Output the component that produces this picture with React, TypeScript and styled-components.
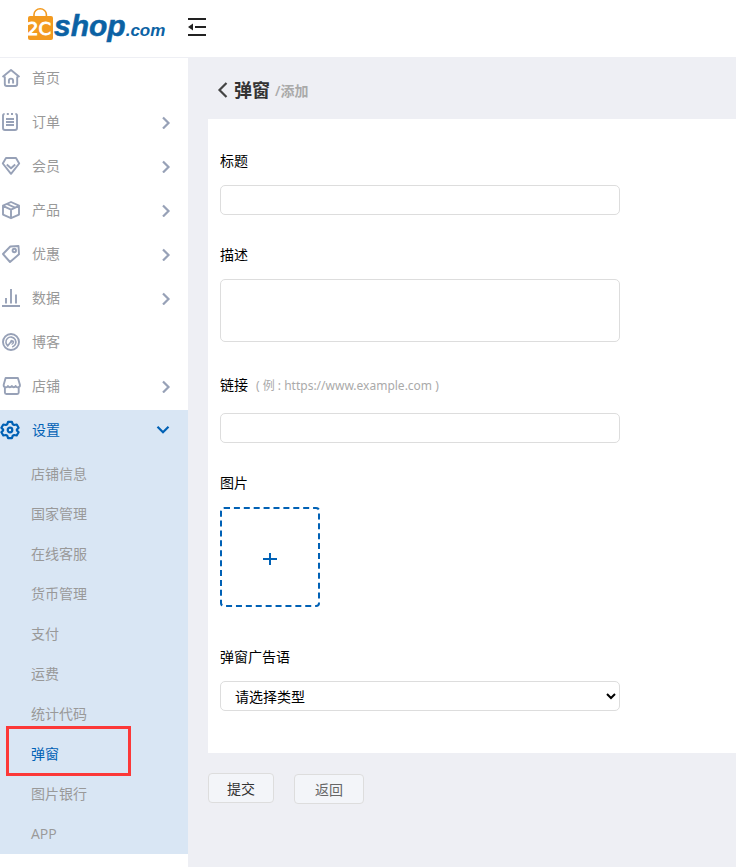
import React from "react";
import styled, { createGlobalStyle } from "styled-components";

const GlobalStyle = createGlobalStyle`
  * { box-sizing: border-box; }
  body {
    margin: 0;
    background: #fff;
    font-family: "Open Sans", "Noto Sans CJK SC", sans-serif;
    font-size: 14px;
    color: #000;
  }
  button, input, textarea, select { font: inherit; }
`;

const Page = styled.div`
  display: flex;
  flex-direction: column;
  min-height: 100vh;
`;

const Header = styled.header`
  display: flex;
  align-items: center;
  height: 58px;
  padding-bottom: 3px;
  border-bottom: 1px solid #eeeff4;
`;

const LogoLink = styled.a`
  display: block;
  width: 188px;
  height: 54px;
`;

const IconButton = styled.button`
  display: flex;
  padding: 0;
  border: 0;
  background: none;
  color: #222;
  cursor: pointer;
`;

const Body = styled.div`
  display: flex;
  flex: 1;
`;

const Sidebar = styled.nav`
  flex: 0 0 188px;
`;

const Menu = styled.ul`
  display: flex;
  flex-direction: column;
  gap: 4px;
  margin: 0;
  padding: 0;
  list-style: none;
`;

const MenuItem = styled.li<{ $open?: boolean }>`
  background: ${(p) => (p.$open ? "#d9e6f4" : "transparent")};
`;

const MenuLink = styled.a<{ $active?: boolean }>`
  display: flex;
  align-items: center;
  height: 40px;
  padding-right: 16px;
  color: ${(p) => (p.$active ? "#0061b5" : "#999")};
  text-decoration: none;

  svg { color: ${(p) => (p.$active ? "#0061b5" : "#97a1b7")}; }
`;

const MenuText = styled.span`
  flex: 1;
  padding: 0 0 2px 10px;
`;

const SubMenu = styled.ul`
  margin: 0;
  padding: 4px 0 0;
  list-style: none;
`;

const SubItem = styled.li`
  position: relative;
`;

const SubLink = styled.a<{ $active?: boolean }>`
  display: block;
  padding-left: 31px;
  line-height: 40px;
  color: ${(p) => (p.$active ? "#0061b5" : "#999")};
  text-decoration: none;
`;

const Highlight = styled.span`
  position: absolute;
  top: -8px;
  left: 6px;
  width: 125px;
  height: 50px;
  border: 3px solid #fc3838;
  pointer-events: none;
`;

const Main = styled.main`
  flex: 1;
  min-width: 0;
  padding-left: 20px;
  background: #eeeff4;
`;

const TitleBar = styled.div`
  display: flex;
  align-items: center;
  height: 61px;
  padding: 2px 0 0 8px;
`;

const Title = styled.h1`
  margin: 0 5px 0 4px;
  font-size: 18px;
  line-height: 28px;
  color: #333;
`;

const Crumb = styled.span`
  font-weight: 600;
  color: #aaa;
`;

const Card = styled.section`
  display: flex;
  flex-direction: column;
  gap: 30px;
  padding: 32px 12px 42px;
  background: #fff;
`;

const Field = styled.div<{ $spaced?: boolean }>`
  display: flex;
  flex-direction: column;
  align-items: flex-start;
  gap: 14px;
  padding-bottom: ${(p) => (p.$spaced ? "10px" : "0")};
`;

const Label = styled.label<{ $tall?: boolean }>`
  line-height: ${(p) => (p.$tall ? "26px" : "20px")};
`;

const Hint = styled.span`
  padding-left: 8px;
  font-family: "Noto Sans", "Noto Sans CJK SC", sans-serif;
  font-size: 12px;
  color: #aaa;
`;

const TextInput = styled.input`
  width: 100%;
  max-width: 400px;
  height: 30px;
  padding: 0 14px;
  border: 1px solid #ddd;
  border-radius: 5px;
  background: #fff;
`;

const TextArea = styled.textarea`
  width: 100%;
  max-width: 400px;
  height: 63px;
  padding: 6px 14px;
  border: 1px solid #ddd;
  border-radius: 5px;
  resize: none;
`;

const Select = styled.select`
  width: 100%;
  max-width: 400px;
  height: 30px;
  padding: 0 2px 0 10px;
  border: 1px solid #ddd;
  border-radius: 5px;
  background: #fff;
  color: #000;
`;

const Upload = styled.button`
  display: flex;
  align-items: center;
  justify-content: center;
  width: 100px;
  height: 100px;
  padding: 4px 0 0;
  border: 2px dashed #0061b5;
  border-radius: 4px;
  background: #fff;
  color: #0061b5;
  cursor: pointer;
`;

const Actions = styled.div`
  display: flex;
  gap: 20px;
  padding: 20px 0;
`;

const Button = styled.button<{ $muted?: boolean }>`
  height: 30px;
  margin-top: ${(p) => (p.$muted ? "1px" : "0")};
  padding: 0 ${(p) => (p.$muted ? "20px" : "18px")};
  border: 1px solid #ddd;
  border-radius: 4px;
  background: #f3f5f9;
  color: ${(p) => (p.$muted ? "#666" : "#333")};
  cursor: pointer;
`;

const Logo = () => (
  <svg width="188" height="54" viewBox="0 0 188 54" role="img" aria-label="2Cshop.com">
    <path d="M34 16v-1.500a6.200 5.700 0 0 1 12.400 0V16" fill="none" stroke="#f39a1f" strokeWidth="1.600" />
    <rect x="28" y="16" width="25" height="24" rx="2" fill="#f39a1f" />
    <text x="27" y="35" fontFamily="DejaVu Sans" fontSize="18" fill="#fff" stroke="#fff" strokeWidth="0.900">2C</text>
    <text x="54" y="36" fontFamily="Liberation Sans" fontSize="30" fontWeight="700" fontStyle="italic" fill="#0b62a4" stroke="#0b62a4" strokeWidth="0.500">
      shop<tspan fontSize="17" stroke="none">.com</tspan>
    </text>
  </svg>
);

const FoldIcon = () => (
  <svg width="18" height="18" viewBox="0 0 18 18" fill="none" stroke="currentColor" strokeWidth="2">
    <path d="M0 1h18M7 9h11M0 17h18" />
    <path d="M0 9l5-3.500v7z" fill="currentColor" stroke="none" />
  </svg>
);

const icons: Record<string, React.ReactNode> = {
  home: <><path d="M2.500 10 11 3l8.500 7M4.800 9.500V17a2 2 0 0 0 2 2h8.400a2 2 0 0 0 2-2V9.500" /><path d="M8.900 16.500v-2.800a2.100 2.100 0 0 1 4.200 0v2.800" /></>,
  order: <><path d="M4.600 3A1.600 1.600 0 0 0 3 4.600V17a2 2 0 0 0 2 2h10a2 2 0 0 0 2-2V4.600A1.600 1.600 0 0 0 15.400 3M6.800 3h2M11 3h2" /><path d="M6 8h8M6 11h8M6 14h8" /></>,
  member: <><path d="M6 3h10l3.200 5.500L11 18.800 2.800 8.500z" /><path d="m6.800 9.500 4.200 3.800 4.200-3.800" /></>,
  product: <><path d="m11 3 8 3.600v9L11 19.200l-8-3.600v-9zM3 6.800l8 3.800 8-3.800M11 10.500V19" /><path d="m7 5 8 3.700" /></>,
  sale: <><path d="M10.300 3.500 18.500 3l.5 8.300-9 7.700-7-8z" /><circle cx="14.300" cy="7.500" r="1.700" /></>,
  data: <path d="M2 19h18M6 16.500v-5.500M11 16.500V2M16 16.500V7.500" />,
  blog: <><circle cx="11" cy="11" r="8" /><path d="M8.400 15.400a5 5 0 1 1 3.800.5M7.200 15.600 11 10.800" strokeWidth="1.600" /><circle cx="11.700" cy="10.300" r="1.500" fill="currentColor" stroke="none" /><path d="M11.500 13.300a2.800 2.800 0 0 0 2-3.700" strokeWidth="1.200" /></>,
  store: <><path d="M5.600 3h12.300l2 6.800a2.200 2.200 0 0 1-4.200 1.200 2.200 2.200 0 0 1-3.900 0 2.200 2.200 0 0 1-3.900 0 2.200 2.200 0 0 1-4.200-1.200z" /><path d="M4.900 13v4.500A1.500 1.500 0 0 0 6.400 19h10.800a1.500 1.500 0 0 0 1.500-1.500V13" /></>,
  settings: <><path d="M8.100 2.800h3.800l.8 2.400 1.500.8 2.500-.5 1.900 3.200-1.700 1.900v.8l1.700 1.900-1.900 3.200-2.500-.5-1.500.8-.8 2.400H8.100l-.8-2.400-1.500-.8-2.500.5-1.900-3.200 1.700-1.900v-.8L1.400 8.700l1.900-3.200 2.500.5 1.500-.8z" /><circle cx="10" cy="11" r="2.300" /></>,
};

const MenuIcon = ({ name }: { name: string }) => (
  <svg width="22" height="22" viewBox="0 0 22 22" fill="none" stroke="currentColor" strokeWidth={name === "settings" ? 2.2 : 1.9} strokeLinejoin="round">
    {icons[name]}
  </svg>
);

const ChevronRight = () => (
  <svg width="12" height="14" viewBox="0 0 12 14" fill="none" stroke="currentColor" strokeWidth="2.200">
    <path d="m3 2.500 5.500 5.500L3 13.500" />
  </svg>
);

const ChevronDown = () => (
  <svg width="16" height="12" viewBox="0 0 16 12" fill="none" stroke="currentColor" strokeWidth="2.200">
    <path d="m1.500 2.800 5.500 5.400 5.500-5.400" />
  </svg>
);

const BackIcon = () => (
  <svg width="14" height="18" viewBox="0 0 14 18" fill="none" stroke="#444" strokeWidth="2.200">
    <path d="M10.500 2 3.500 9l7 7" />
  </svg>
);

const PlusIcon = () => (
  <svg width="14" height="14" viewBox="0 0 14 14" stroke="currentColor" strokeWidth="2">
    <path d="M0 7h14M7 1v12" />
  </svg>
);

const menu = [
  { icon: "home", text: "首页", arrow: false },
  { icon: "order", text: "订单", arrow: true },
  { icon: "member", text: "会员", arrow: true },
  { icon: "product", text: "产品", arrow: true },
  { icon: "sale", text: "优惠", arrow: true },
  { icon: "data", text: "数据", arrow: true },
  { icon: "blog", text: "博客", arrow: false },
  { icon: "store", text: "店铺", arrow: true },
];

const settings = ["店铺信息", "国家管理", "在线客服", "货币管理", "支付", "运费", "统计代码", "弹窗", "图片银行", "APP"];

export default function App() {
  return (
    <Page>
      <GlobalStyle />
      <Header>
        <LogoLink href="#"><Logo /></LogoLink>
        <IconButton type="button" aria-label="收起菜单"><FoldIcon /></IconButton>
      </Header>
      <Body>
        <Sidebar>
          <Menu>
            {menu.map((m) => (
              <MenuItem key={m.text}>
                <MenuLink href="#">
                  <MenuIcon name={m.icon} />
                  <MenuText>{m.text}</MenuText>
                  {m.arrow && <ChevronRight />}
                </MenuLink>
              </MenuItem>
            ))}
            <MenuItem $open>
              <MenuLink href="#" $active>
                <MenuIcon name="settings" />
                <MenuText>设置</MenuText>
                <ChevronDown />
              </MenuLink>
              <SubMenu>
                {settings.map((s) => (
                  <SubItem key={s}>
                    <SubLink href="#" $active={s === "弹窗"}>{s}</SubLink>
                    {s === "弹窗" && <Highlight />}
                  </SubItem>
                ))}
              </SubMenu>
            </MenuItem>
          </Menu>
        </Sidebar>
        <Main>
          <TitleBar>
            <IconButton type="button" aria-label="后退"><BackIcon /></IconButton>
            <Title>弹窗</Title>
            <Crumb>/添加</Crumb>
          </TitleBar>
          <form>
            <Card>
              <Field>
                <Label htmlFor="title">标题</Label>
                <TextInput id="title" type="text" />
              </Field>
              <Field>
                <Label htmlFor="description">描述</Label>
                <TextArea id="description" />
              </Field>
              <Field>
                <Label htmlFor="link" $tall>链接<Hint>( 例 : https://www.example.com )</Hint></Label>
                <TextInput id="link" type="text" />
              </Field>
              <Field $spaced>
                <Label htmlFor="image">图片</Label>
                <Upload id="image" type="button"><PlusIcon /></Upload>
              </Field>
              <Field>
                <Label htmlFor="slogan">弹窗广告语</Label>
                <Select id="slogan"><option>请选择类型</option></Select>
              </Field>
            </Card>
            <Actions>
              <Button type="submit">提交</Button>
              <Button type="button" $muted>返回</Button>
            </Actions>
          </form>
        </Main>
      </Body>
    </Page>
  );
}
